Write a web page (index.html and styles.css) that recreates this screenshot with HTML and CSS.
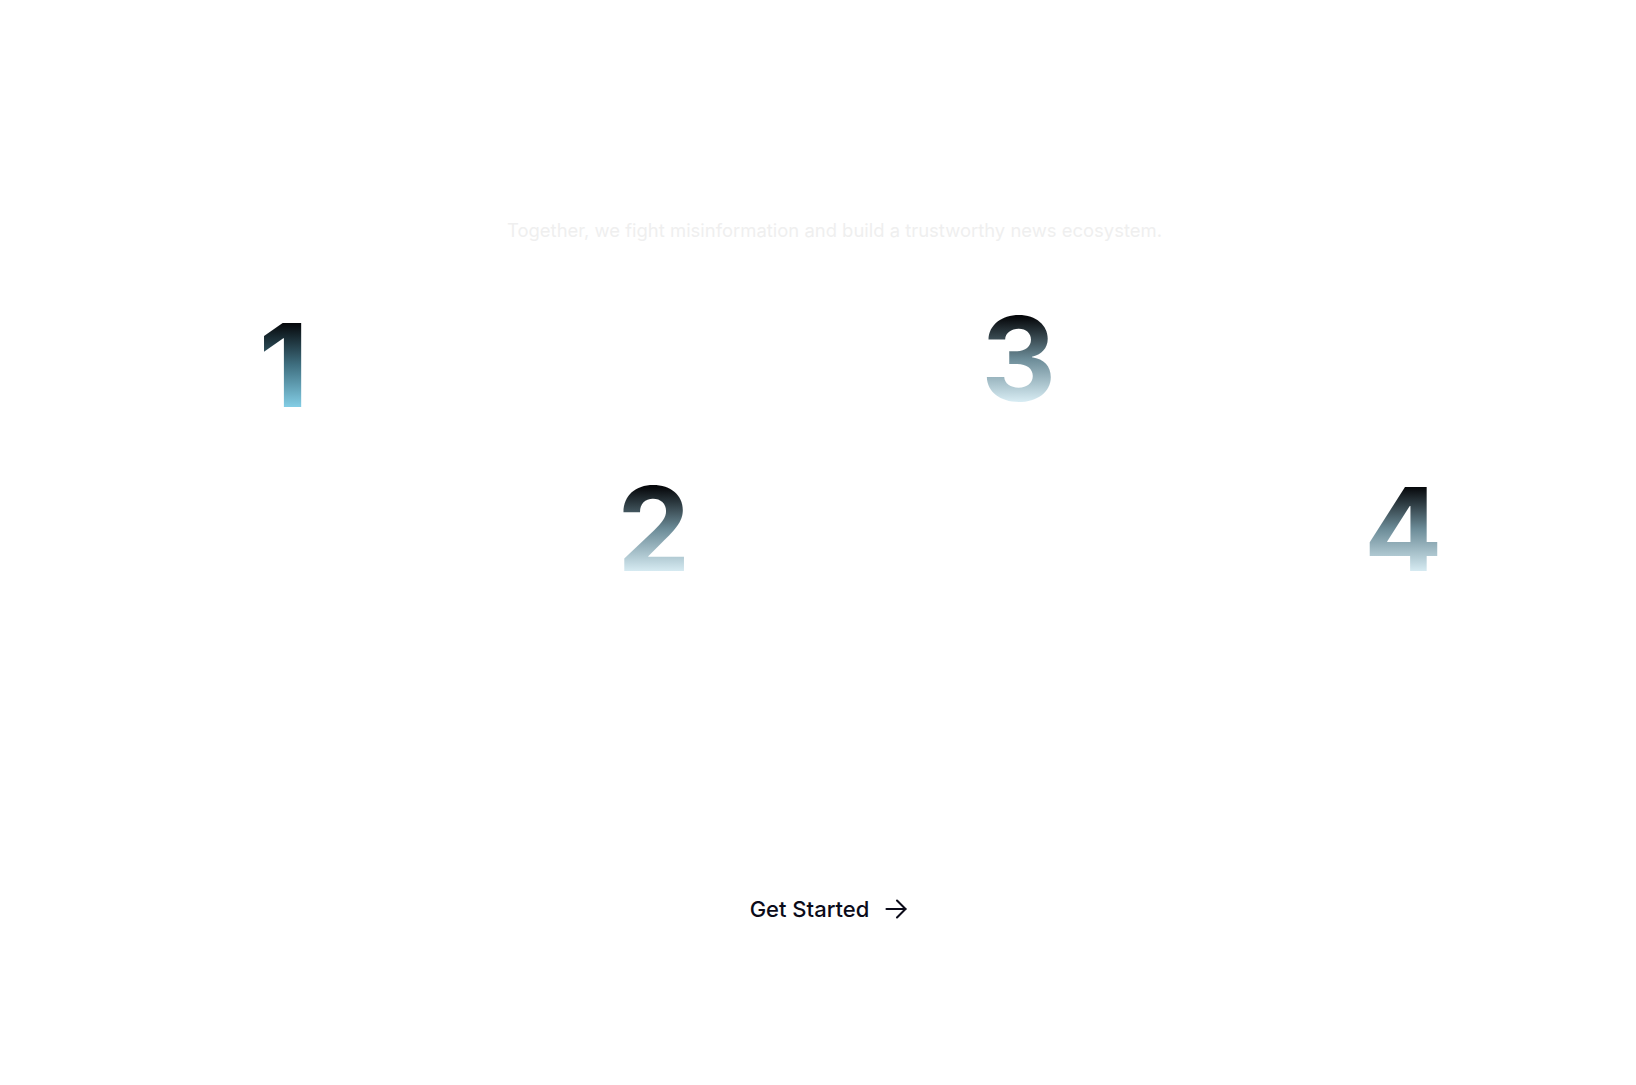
FILE: index.html
```html
<!DOCTYPE html>
<html lang="en">
<head>
<meta charset="utf-8">
<title>How it works</title>
<link rel="stylesheet" href="styles.css">
</head>
<body>
<main class="page">
  <p class="subtitle">Together, we fight misinformation and build a trustworthy news ecosystem.</p>
  <div class="steps">
    <div class="step"><span class="num num-accent">1</span></div>
    <div class="step step-low step-shift-sm"><span class="num">2</span></div>
    <div class="step step-up"><span class="num">3</span></div>
    <div class="step step-low step-shift"><span class="num">4</span></div>
  </div>
  <a class="cta" href="#">
    <span>Get Started</span>
    <svg class="cta-icon" viewBox="0 0 22 20" width="22" height="20" fill="none" stroke="currentColor" stroke-width="2.1" stroke-linecap="round" stroke-linejoin="round"><path d="M1.5 10h19"/><path d="M12 1.5 20.5 10 12 18.5"/></svg>
  </a>
</main>
</body>
</html>
```
FILE: styles.css
```css
* { box-sizing: border-box; }
html, body { margin: 0; background: #ffffff; }
body { font-family: Inter, "Noto Sans", "Liberation Sans", sans-serif; }

.page {
  display: flex;
  flex-direction: column;
  align-items: center;
  padding-left: 28px;
  min-height: 1085px;
}

.subtitle {
  margin: 216px 0 0 5px;
  font-size: 18.45px;
  line-height: 28px;
  color: #efefef;
}

.steps {
  align-self: stretch;
  display: grid;
  grid-template-columns: repeat(4, 1fr);
  align-items: start;
  margin-top: 63px;
  padding: 0 66px 0 72px;
}

.step {
  display: flex;
  justify-content: center;
}
.step-low { margin-top: 164px; }
.step-up { margin-top: -6px; }
.step-shift { margin-left: 34px; }
.step-shift-sm { margin-left: 5px; }

.num {
  display: inline-block;
  font-size: 116px;
  line-height: 1;
  font-weight: 700;
  background: linear-gradient(180deg, #06080b 14%, #6c8c98 50%, #dbeff6 88%);
  -webkit-background-clip: text;
  background-clip: text;
  color: transparent;
}
.num-accent {
  background: linear-gradient(180deg, #06080b 14%, #3f6f80 50%, #86d2ea 88%);
  -webkit-background-clip: text;
  background-clip: text;
}

.cta {
  display: flex;
  align-items: center;
  gap: 16px;
  margin-top: 308px;
  margin-right: 7px;
  font-size: 22px;
  line-height: 28px;
  font-weight: 500;
  color: #0b0b19;
  text-decoration: none;
}
.cta-icon { display: block; }
```
